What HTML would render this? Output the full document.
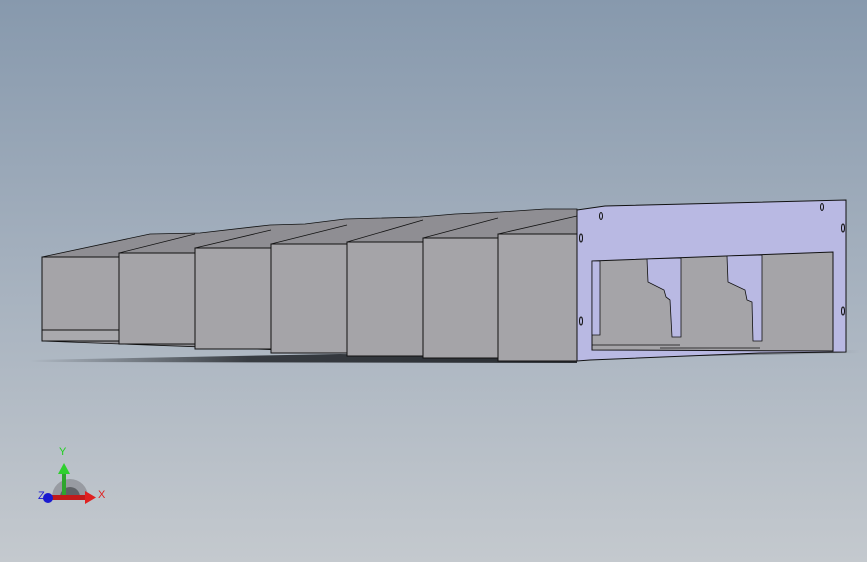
<!DOCTYPE html>
<html><head><style>
html,body{margin:0;padding:0;}
body{width:867px;height:562px;overflow:hidden;background:linear-gradient(#8799ad 0%,#a3afbd 45%,#c4c9ce 100%);font-family:"Liberation Sans",sans-serif;}
svg{position:absolute;left:0;top:0}
</style></head><body>
<svg width="867" height="562" viewBox="0 0 867 562">
<defs>
<linearGradient id="sh" x1="0" x2="1"><stop offset="0" stop-color="#2a2e33" stop-opacity="0"/><stop offset="0.4" stop-color="#2a2e33" stop-opacity="0.9"/><stop offset="1" stop-color="#2a2e33"/></linearGradient>
<linearGradient id="sh2" x1="0" x2="1"><stop offset="0" stop-color="#2a2e33"/><stop offset="1" stop-color="#2a2e33" stop-opacity="0"/></linearGradient>
</defs>
<!-- shadow -->
<polygon points="30,360 340,354 577,358 577,363 30,362" fill="url(#sh)"/>
<polygon points="590,352 860,350 860,353 590,358" fill="url(#sh2)"/>
<!-- top surfaces -->
<polygon points="42,257 150,234 200,233 270,225 305,224 345,219 420,217 455,214 500,212 545,209 577,209 577,361 42,341" fill="#8f8e93" stroke="#111" stroke-width="0.8"/>
<g stroke="#111" stroke-width="0.8" fill="none">
<line x1="119" y1="253" x2="195" y2="234"/>
<line x1="195" y1="248" x2="271" y2="230"/>
<line x1="271" y1="244" x2="347" y2="225"/>
<line x1="347" y1="242" x2="423" y2="220"/>
<line x1="423" y1="238" x2="498" y2="218"/>
<line x1="498" y1="234" x2="577" y2="216"/>
</g>
<!-- front faces -->
<g fill="#a5a4a8" stroke="#111" stroke-width="1">
<rect x="42" y="257" width="77" height="84"/>
<rect x="42" y="330" width="77" height="11" fill="#a9a9ad"/>
<rect x="119" y="253" width="76" height="91"/>
<rect x="195" y="248" width="76" height="101"/>
<rect x="271" y="244" width="76" height="109"/>
<rect x="347" y="242" width="76" height="114"/>
<rect x="423" y="238" width="75" height="120"/>
<rect x="498" y="234" width="79" height="127"/>
</g>
<!-- plate -->
<polygon points="577,210 605,206 846,200 846,352 760,353 590,360 577,361" fill="#b9b9e3" stroke="#111" stroke-width="1"/>
<polygon points="592,261 833,252 833,351 592,350" fill="#a5a4a8" stroke="#111" stroke-width="1"/>
<!-- fingers -->
<g fill="#b9b9e3" stroke="#111" stroke-width="0.8">
<polygon points="592,261 600,261 600,335 592,335"/>
<polygon points="647,259 681,258 681,337 672,337 670,300 666,297 664,290 648,282"/>
<polygon points="727,256 762,255 762,341 753,341 752,302 747,300 745,290 728,282"/>
</g>
<line x1="592" y1="345" x2="680" y2="345" stroke="#111" stroke-width="0.8"/>
<line x1="660" y1="348" x2="760" y2="348" stroke="#111" stroke-width="0.8"/>
<!-- holes -->
<g fill="#b9b9e3" stroke="#111" stroke-width="1">
<ellipse cx="601" cy="216" rx="1.5" ry="3.5"/>
<ellipse cx="581" cy="238" rx="1.5" ry="4"/>
<ellipse cx="581" cy="321" rx="1.5" ry="4"/>
<ellipse cx="822" cy="207" rx="1.5" ry="3.5"/>
<ellipse cx="843" cy="228" rx="1.5" ry="4"/>
<ellipse cx="843" cy="311" rx="1.5" ry="4"/>
</g>
<!-- triad -->
<path d="M52,497 A18,18 0 0 1 88,497 Z" fill="#8e9197" opacity="0.8"/>
<path d="M60,497 A10,10 0 0 1 80,497 Z" fill="#5e6166"/>
<rect x="62" y="473" width="4" height="24" fill="#2ea52e"/>
<polygon points="58,474 64,463 70,474" fill="#2ed02e"/>
<rect x="48" y="495" width="38" height="5" fill="#c21a1a"/>
<polygon points="85,491 96,497.5 85,504" fill="#e02020"/>
<circle cx="48" cy="498" r="5" fill="#1a1ad0"/>
<text x="59" y="455" font-size="11" fill="#1fd01f">Y</text>
<text x="98" y="498" font-size="11" fill="#e02020">X</text>
<text x="38" y="499" font-size="11" fill="#1a1ad0">Z</text>
</svg>
</body></html>
